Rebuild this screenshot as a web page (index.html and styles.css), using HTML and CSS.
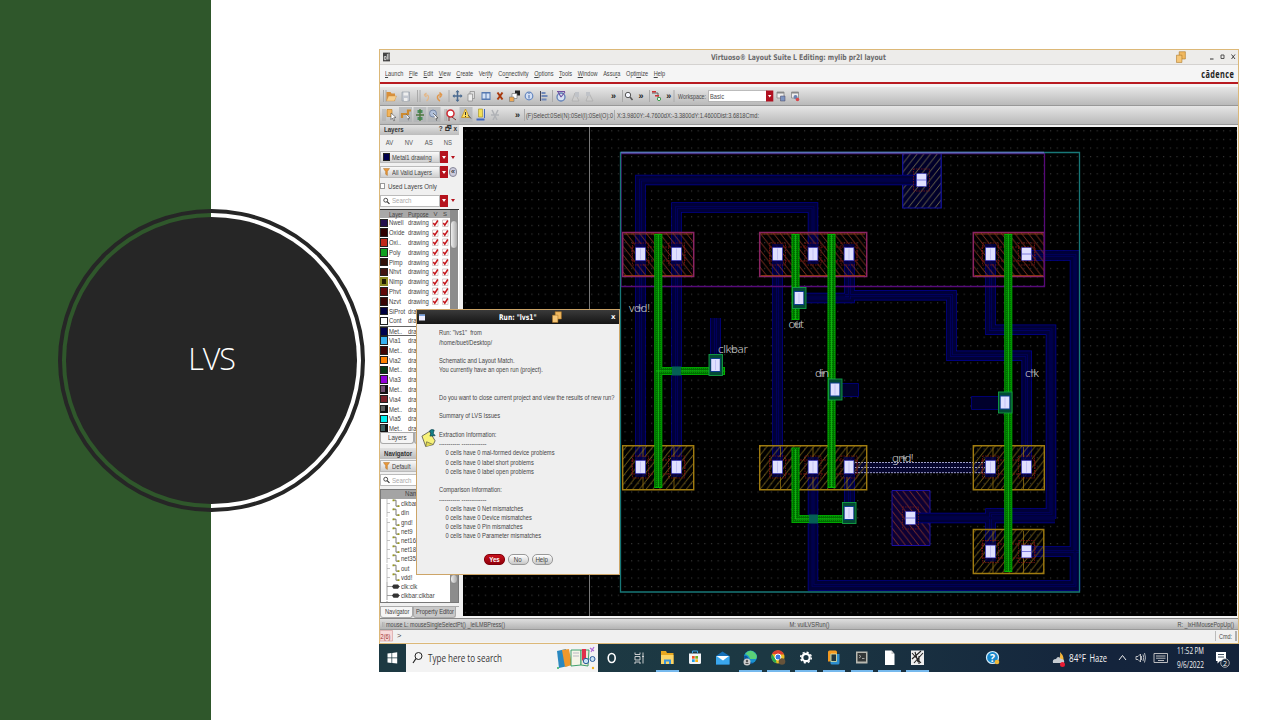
FILE: index.html
```html
<!DOCTYPE html>
<html lang="en">
<head>
<meta charset="utf-8">
<title>LVS</title>
<link rel="stylesheet" href="styles.css">
</head>
<body>
<svg class="defs" width="0" height="0">
  <defs>
    <symbol id="chk" viewBox="0 0 7 8"><rect width="7" height="8" fill="#fff"/><path d="M.5 7.500V1H6v6.500z" fill="none" stroke="#c8b8b8" stroke-width=".7"/><path d="M1.300 4l1.500 2.200L5.800 1.500" fill="none" stroke="#c4161c" stroke-width="1.500"/></symbol>
    <symbol id="net" viewBox="0 0 20 9"><path d="M6 0v9M6 4.500h3" stroke="#aaa" stroke-width=".7"/><path d="M12 1.200h3v6h3" fill="none" stroke="#666" stroke-width=".9"/><path d="M11.500 .5h2v1.700h-2zM16.500 6.300h2V8h-2z" fill="#9a9a20"/></symbol>
    <symbol id="pin" viewBox="0 0 20 9"><path d="M6 0v9M6 4.500h13" stroke="#888" stroke-width=".8"/><path d="M11 4.500l1.500-2H17l1.500 2-1.500 2.200h-4.500z" fill="#333"/></symbol>
    <symbol id="funnel" viewBox="0 0 8 9"><path d="M.5.500h7L5 4v4.500L3 7V4z" fill="#e8973a" stroke="#a86a20" stroke-width=".5"/></symbol>
    <symbol id="mag" viewBox="0 0 9 9"><circle cx="3.500" cy="3.500" r="2.500" fill="#fff" stroke="#333" stroke-width="1.100"/><path d="M5.300 5.300l3 3" stroke="#333" stroke-width="1.500"/></symbol>
    <symbol id="sheets" viewBox="0 0 11 13"><path d="M3.500.700h6.800v8H3.500z" fill="#f0b860" stroke="#a87020" stroke-width=".6"/><path d="M.5 4.500h6v8h-6z" fill="#f6c778" stroke="#a87020" stroke-width=".6"/></symbol>
  </defs>
</svg>
<main class="slide">
  <aside class="band"></aside>
  <div class="disc"><div class="disc-in">LVS</div></div>
  <section class="shot">
    <div class="win">
      <header class="title">
        <svg class="app" viewBox="0 0 8 10"><path d="M0 0h8v10H0z" fill="#444"/><path d="M1.500 8V4.500h2V8zM5 1.500V8M6.800 1v7" stroke="#eee" fill="none" stroke-width=".9"/></svg>
        <span class="title-text">Virtuoso® Layout Suite L Editing: mylib pr2l layout</span>
        <svg class="tsheets"><use href="#sheets"/></svg>
        <svg class="wbtn" viewBox="0 0 28 8"><path d="M1 6h3.500" stroke="#333"/><path d="M12 2h3v3.500h-3z" fill="none" stroke="#444" stroke-width=".9"/><path d="M22.500 1.500l3.500 4.500M26 1.500L22.500 6" stroke="#333" stroke-width=".9"/></svg>
      </header>
      <nav class="menu">
        <div class="menu-items"><span><u>L</u>aunch</span><span><u>F</u>ile</span><span><u>E</u>dit</span><span><u>V</u>iew</span><span><u>C</u>reate</span><span>Ver<u>i</u>fy</span><span>Co<u>n</u>nectivity</span><span><u>O</u>ptions</span><span><u>T</u>ools</span><span><u>W</u>indow</span><span>Assu<u>r</u>a</span><span>Opti<u>m</u>ize</span><span><u>H</u>elp</span></div>
        <div class="brand">cādence</div>
      </nav>
      <div class="tools">
        <svg width="859" height="18" viewBox="380 87 859 18">
          <g fill="none" stroke="#aaa" stroke-width="1"><path d="M383.500 90v12M386 90v12M417.500 90v12M420 90v12M449 90v12M552.500 90v12M622.500 90v12M649.500 90v12M674 90v12"/></g>
          <path d="M386.500 92h4l1 1.500h3.500V101h-8.500z" fill="#d88f3a"/><path d="M386.500 101l2-5h8l-2 5z" fill="#f5cf90" stroke="#c98b3c" stroke-width=".4"/>
          <path d="M402 92h7.500v9H402z" fill="#c4c8d0" stroke="#9aa0aa" stroke-width=".7"/><path d="M403.500 92.500h4.500v3h-4.500zM404 98h3.500v3H404z" fill="#eee"/>
          <path d="M424 95l2.500-2M424 95l2.500 2M424 95q5-1 4.500 3-.5 2-2 3" fill="none" stroke="#e3b88a" stroke-width="1.300"/>
          <path d="M442 95l-2.500-2.500M442 95l-2.500 2.500M442 95q-5-1-4.500 3 .5 2 2.500 3" fill="none" stroke="#e0964a" stroke-width="1.500"/>
          <path d="M457.500 91v10M453.500 96h8" stroke="#4a6a90" stroke-width="1.500"/><path d="M457.500 90l2 2.300h-4zM457.500 102l2-2.300h-4zM452.500 96l2-2v4zM462.500 96l-2-2v4z" fill="#4a6a90"/>
          <path d="M470 91.500h4.500v7H470z" fill="#ddd" stroke="#888" stroke-width=".7"/><path d="M468 94h4.500v7H468z" fill="#eee" stroke="#888" stroke-width=".7"/>
          <path d="M481.500 92h9v8h-9z" fill="#5578b0"/><path d="M482.500 93.500h3v5h-3zM486.500 93.500h3v5h-3z" fill="#d5e2f5"/>
          <path d="M497.500 92.500l5 7M502.500 92.500l-5 7" stroke="#a8380c" stroke-width="2"/>
          <path d="M515 90.500h5v5h-5z" fill="#222"/><path d="M512 93.500h5v5h-5z" fill="#fff" stroke="#777" stroke-width=".7"/><path d="M509.500 97h4.500v4.500h-4.500z" fill="#f0a850" stroke="#777" stroke-width=".6"/>
          <circle cx="529" cy="96" r="3.800" fill="#d4e0f4" stroke="#6688c0" stroke-width="1.200"/><path d="M529 95v3.500M529 93v1" stroke="#4468a8"/>
          <path d="M540.500 91v10" stroke="#445" stroke-width="1"/><path d="M541.500 92h4v2h-4zM541.500 95h6v2h-6zM541.500 98.500h5v2h-5z" fill="#7088b8"/>
          <circle cx="561" cy="97" r="4" fill="#d8e2f2" stroke="#6080b8" stroke-width="1.300"/><path d="M561 97l-3-5M561 97l4-5M557 91.500h8" stroke="#7050a0" stroke-width="1.100"/>
          <path d="M572 101l3-8 4 8zM586 101l3-8 4 8z" fill="#ccc" stroke="#aaa" stroke-width=".7"/><path d="M575 92h4v5h-4zM586 92h4v4h-4z" fill="#c0c3c8"/>
          <g class="more"><text x="611" y="98.700">»</text><text x="638.500" y="98.700">»</text><text x="666.300" y="98.700">»</text></g>
          <circle cx="628" cy="95" r="2.700" fill="#f6f8ff" stroke="#555"/><path d="M630 97l2.500 3" stroke="#555" stroke-width="1.500"/>
          <path d="M652 93h6v5h2.500" fill="none" stroke="#555" stroke-width=".9"/><path d="M652 91h4v1.500h-4zM655 95h4v1.500h-4z" fill="#c33"/><circle cx="659" cy="99" r="1.600" fill="#fff" stroke="#3a9a4a"/>
          <text class="st" x="678" y="99" textLength="28" lengthAdjust="spacingAndGlyphs">Workspace:</text>
          <path d="M708.500 90.500H767v11h-58.500z" fill="#fff" stroke="#999" stroke-width=".6"/><text class="st" x="710" y="99" textLength="14" lengthAdjust="spacingAndGlyphs">Basic</text>
          <path d="M766 90.500h7.300v11H766z" fill="#b01020"/><path d="M768 95h3.400l-1.700 2.500z" fill="#fff"/>
          <path d="M777 92h7v6h-7z" fill="#eee" stroke="#888" stroke-width=".8"/><path d="M777 92h7v1.500h-7z" fill="#888"/><path d="M780.500 96h4.500v5h-4.500z" fill="#7d94c0" stroke="#446" stroke-width=".5"/>
          <path d="M791.500 92h7v6h-7z" fill="#eee" stroke="#888" stroke-width=".8"/><path d="M791.500 92h7v1.500h-7z" fill="#888"/><circle cx="795.500" cy="97" r="2" fill="#6a80b0"/><circle cx="797.500" cy="99.500" r="1.800" fill="#d8454a"/>
        </svg>
      </div>
      <div class="tools second">
        <svg width="859" height="18" viewBox="380 106 859 18">
          <path d="M399 107h13v15h-13zM413.500 107h13v15h-13zM427.500 107h13v15h-13zM459.500 107h13v15h-13z" fill="#aeb0b4" opacity=".7"/>
          <path d="M383 109v12M385 109v12M445 109v12M446.700 109v12M524.500 109v12" stroke="#aaa"/>
          <path d="M387 109.500h5v7h-5z" fill="#f3b45a" stroke="#b87820" stroke-width=".6"/><path d="M391 113l5 4.500-2.300.2 1 2.800-1 .3-1.200-2.800-1.500 1.500z" fill="#fff" stroke="#333" stroke-width=".5"/>
          <path d="M402 118v-4h6v-3.500h3" fill="none" stroke="#cc8a30" stroke-width="2.200"/><path d="M406 114l4 4-2 .3.500 2" fill="#fff" stroke="#333" stroke-width=".5"/>
          <path d="M417.500 110h5v3h-5zM417.500 117h5v3h-5z" fill="#4a9060"/><path d="M420 109v12M416 115h8" stroke="#507840" stroke-width="1.400"/>
          <circle cx="433" cy="113.500" r="3.500" fill="#b0c0da" stroke="#7788a8"/><path d="M433 113l5 5-2 .2.600 2.500" fill="#fff" stroke="#444" stroke-width=".7"/>
          <circle cx="450.500" cy="113.500" r="3.500" fill="#fff" stroke="#d02830" stroke-width="1.500"/><path d="M449 117v4M452 117l4 3" stroke="#733"/>
          <path d="M465.500 109l4 8.500h-8z" fill="#ffe060" stroke="#c09020" stroke-width=".8"/><path d="M465.500 112v3M465.500 116v1" stroke="#333"/><path d="M468 115l3 3.500" stroke="#555"/>
          <path d="M478.500 109h4v8h-4z" fill="#f4e058" stroke="#a09020" stroke-width=".6"/><path d="M476.500 118.500h8v2h-8z" fill="#4068c0"/><path d="M484.500 109v9" stroke="#4068c0"/>
          <path d="M492 110l5 10M498 110l-5 10M491 115h8" stroke="#b0b2b6" stroke-width="1.500"/>
          <g class="more"><text x="515" y="117.700">»</text></g>
          <text class="st" x="526" y="117.500" textLength="87" lengthAdjust="spacingAndGlyphs">(F)Select:0Sel(N):0Sel(I):0Sel(O):0</text><path d="M614.500 110v10" stroke="#999" stroke-width=".7"/>
          <text class="st" x="617" y="117.500" textLength="142" lengthAdjust="spacingAndGlyphs">X:3.9800Y:-4.7600dX:-3.3800dY:1.4600Dist:3.6818Cmd:</text>
        </svg>
      </div>
      <div class="work">
        <div class="side">
          <div class="head"><b>Layers</b><span>? 🗗 x</span></div>
          <div class="avs"><span>AV</span><span>NV</span><span>AS</span><span>NS</span></div>
          <div class="pick"><div class="combo"><i class="sw" style="background:#00004e"></i><span class="t">Metal1 drawing</span></div><i class="drop"></i><i class="tri"></i></div>
          <div class="pick"><div class="combo"><svg class="fun"><use href="#funnel"/></svg><span class="t">All Valid Layers</span></div><i class="drop"></i><i class="rew">«</i></div>
          <div class="used"><i></i><span class="t">Used Layers Only</span></div>
          <div class="pick find"><div class="combo white"><svg class="fun"><use href="#mag"/></svg><span class="t ph">Search</span></div><i class="drop"></i><i class="tri"></i></div>
          <div class="table">
            <div class="rows">
              <div class="row th"><i></i><span>Layer</span><span>Purpose</span><em>V</em><em>S</em></div>
              <div class="row"><i style="background:#24104e"></i><span>Nwell</span><span>drawing</span><svg><use href="#chk"/></svg><svg><use href="#chk"/></svg></div>
              <div class="row"><i style="background:#300000"></i><span>Oxide</span><span>drawing</span><svg><use href="#chk"/></svg><svg><use href="#chk"/></svg></div>
              <div class="row"><i style="background:#c02818"></i><span>Oxi..</span><span>drawing</span><svg><use href="#chk"/></svg><svg><use href="#chk"/></svg></div>
              <div class="row"><i style="background:#10a020"></i><span>Poly</span><span>drawing</span><svg><use href="#chk"/></svg><svg><use href="#chk"/></svg></div>
              <div class="row"><i style="background:#301008"></i><span>Pimp</span><span>drawing</span><svg><use href="#chk"/></svg><svg><use href="#chk"/></svg></div>
              <div class="row"><i style="background:#401410"></i><span>Nhvt</span><span>drawing</span><svg><use href="#chk"/></svg><svg><use href="#chk"/></svg></div>
              <div class="row"><i class="yl"></i><span>Nimp</span><span>drawing</span><svg><use href="#chk"/></svg><svg><use href="#chk"/></svg></div>
              <div class="row"><i style="background:#600808"></i><span>Phvt</span><span>drawing</span><svg><use href="#chk"/></svg><svg><use href="#chk"/></svg></div>
              <div class="row"><i style="background:#380404"></i><span>Nzvt</span><span>drawing</span><svg><use href="#chk"/></svg><svg><use href="#chk"/></svg></div>
              <div class="row"><i style="background:#000040"></i><span>SiProt</span><span>drawing</span></div>
              <div class="row"><i style="background:#fff"></i><span>Cont</span><span>drawing</span></div>
              <div class="row cur"><i style="background:#00004e"></i><span>Met..</span><span>drawing</span></div>
              <div class="row"><i style="background:#38b0f0"></i><span>Via1</span><span>drawing</span></div>
              <div class="row"><i style="background:#400404"></i><span>Met..</span><span>drawing</span></div>
              <div class="row"><i style="background:#ff8000"></i><span>Via2</span><span>drawing</span></div>
              <div class="row"><i style="background:#063a14"></i><span>Met..</span><span>drawing</span></div>
              <div class="row"><i style="background:#9000d8"></i><span>Via3</span><span>drawing</span></div>
              <div class="row"><i class="mx" style="background:#705070"></i><span>Met..</span><span>drawing</span></div>
              <div class="row"><i style="background:#782028"></i><span>Via4</span><span>drawing</span></div>
              <div class="row"><i class="mx" style="background:#606060"></i><span>Met..</span><span>drawing</span></div>
              <div class="row"><i style="background:#00f0f0"></i><span>Via5</span><span>drawing</span></div>
              <div class="row"><i class="mx" style="background:#406060"></i><span>Met..</span><span>drawing</span></div>
            </div>
            <div class="scroll"><i></i></div>
          </div>
          <div class="tabs"><span class="tab on"><span class="t">Layers</span></span><span class="tab"></span></div>
          <div class="head nav"><b>Navigator</b></div>
          <div class="pick"><div class="combo"><svg class="fun"><use href="#funnel"/></svg><span class="t">Default</span></div></div>
          <div class="pick find2"><div class="combo white"><svg class="fun"><use href="#mag"/></svg><span class="t ph">Search</span></div></div>
          <div class="tree">
            <div class="nets">
              <div class="nh"><span class="t">Name</span></div>
              <div class="nr"><svg><use href="#net"/></svg><span>clkbar</span></div>
              <div class="nr"><svg><use href="#net"/></svg><span>din</span></div>
              <div class="nr"><svg><use href="#net"/></svg><span>gnd!</span></div>
              <div class="nr"><svg><use href="#net"/></svg><span>net9</span></div>
              <div class="nr"><svg><use href="#net"/></svg><span>net16</span></div>
              <div class="nr"><svg><use href="#net"/></svg><span>net18</span></div>
              <div class="nr"><svg><use href="#net"/></svg><span>net35</span></div>
              <div class="nr"><svg><use href="#net"/></svg><span>out</span></div>
              <div class="nr"><svg><use href="#net"/></svg><span>vdd!</span></div>
              <div class="nr"><svg><use href="#pin"/></svg><span>clk:clk</span></div>
              <div class="nr"><svg><use href="#pin"/></svg><span>clkbar:clkbar</span></div>
              <div class="nr"><svg><use href="#pin"/></svg><span>din:din</span></div>
            </div>
            <div class="scroll low"><i></i></div>
          </div>
          <div class="tabs bottom"><span class="tab on"><span class="t">Navigator</span></span><span class="tab"><span class="t">Property Editor</span></span></div>
        </div>
        <svg class="canvas" viewBox="463 127 774 489">
          <defs>
            <pattern id="dots" x="462" y="135" width="6.650" height="8.600" patternUnits="userSpaceOnUse"><rect x="3" y="4" width="1" height="1" fill="#4c4c4c"/></pattern>
            <pattern id="bs" width="6.700" height="8.500" patternUnits="userSpaceOnUse"><path d="M-1-1.270L7.700 9.770M-1 7.230L1 9.770M5.700-1.270L7.700 1.270" stroke="#9a3c26" stroke-width=".8"/></pattern>
            <pattern id="fs" width="6.700" height="8.500" patternUnits="userSpaceOnUse"><path d="M-1 9.770L7.700-1.270M-1 1.270L1-1.270M5.700 9.770L7.700 7.230" stroke="#92761a" stroke-width=".8"/></pattern>
            <pattern id="fsg" width="6.700" height="8.500" patternUnits="userSpaceOnUse"><path d="M-1 9.770L7.700-1.270M-1 1.270L1-1.270M5.700 9.770L7.700 7.230" stroke="#77714e" stroke-width=".9"/></pattern>
            <pattern id="gp" width="2" height="2" patternUnits="userSpaceOnUse"><rect width="2" height="2" fill="#006c00"/><rect width="1" height="1" fill="#009800"/></pattern>
            <g id="wires" fill="none">
              <path d="M640.500 472V180H925M676.500 472V207.500H813V258M777.500 249V472M799 298H849.500V249M845 295.300H951.500V355.700H1026.700V472M990.500 249V329.700H1051V513.500H990.500V556M905 518H1055M1026 255.500H1075V585.500H813V462M1022 551.500H1079M849.500 462V516M715.500 318V368"/>
            </g>
            <g id="cont"><rect x="-8" y="-11" width="16" height="22" fill="none" stroke="#7c1414" stroke-width=".8" stroke-dasharray="1.500 1"/><rect x="-5.500" y="-10" width="11" height="20" fill="#00004c" opacity=".8"/><rect x="-4.800" y="-6.300" width="9.600" height="12.600" fill="#e0e0ff" stroke="#5050d8" stroke-width=".6"/><path d="M0-5.500v11" stroke="#b4b4f2" stroke-width=".7"/></g>
            <g id="conth"><rect x="-8" y="-11" width="16" height="22" fill="none" stroke="#7c1414" stroke-width=".8" stroke-dasharray="1.500 1"/><rect x="-4.800" y="-6.300" width="9.600" height="12.600" fill="#e0e0ff" stroke="#5050d8" stroke-width=".6"/><path d="M-4.500 0h9" stroke="#7070d8" stroke-width=".9"/></g>
            <g id="via"><rect x="-6.500" y="-10.500" width="13.500" height="21" fill="#034a34" stroke="#12a044" stroke-width=".9"/><rect x="-5" y="-7" width="10" height="14" fill="#0c3c90"/><rect x="-4.300" y="-6" width="8.600" height="12" fill="#e0e0ff"/><path d="M0-5v10" stroke="#b4b4f2" stroke-width=".7"/></g>
          </defs>
          <path d="M463 127h774v489H463z" fill="#000"/>
          <path d="M463 127h774v489H463z" fill="url(#dots)"/>
          <path d="M589.500 127v489" stroke="#777" stroke-width="1"/>
          <path d="M902.700 153h38.500v55h-38.500z" fill="#00002a"/><path d="M902.700 153h38.500v55h-38.500z" fill="url(#fsg)" stroke="#1414a0" stroke-width="1.200"/>
          <path d="M892 490.500h38v55h-38z" fill="#0c0034"/><path d="M892 490.500h38v55h-38z" fill="url(#bs)" stroke="#1c10a0" stroke-width="1"/>
          <use href="#wires" stroke="#000094" stroke-width="10.500"/>
          <use href="#wires" stroke="#000038" stroke-width="9"/>
          <use href="#wires" stroke="#00006c" stroke-width="2.600"/>
          <use href="#wires" stroke="#00003c" stroke-width="1.300"/>
          <path d="M835 383.500h23.500v13H835zM971.500 396.500H1000v13h-28.500z" fill="#00002c" stroke="#00007c" stroke-width=".9"/>
          <path d="M849 462.500h141v10.500H849z" fill="#06062e"/><path d="M849 462.500h141M849 467.500h141M849 472.700h141" stroke="#9c9cc8" stroke-width="1" stroke-dasharray="2 1"/>
          <g fill="url(#bs)" stroke="#8c2464" stroke-width="1.500">
            <path d="M622.700 232.500h71v44h-71zM759.700 232.500h107v44h-107zM973.300 232.500h71v44h-71z"/>
            <path d="M624 234h68M624 275.500h68M761 234h104M761 275.500h104M975 234h68M975 275.500h68" stroke="#a04010" stroke-width=".8"/>
          </g>
          <g fill="url(#fs)" stroke="#a07c10" stroke-width="1.400">
            <path d="M622.700 445.700h71v44h-71zM759.700 445.700h107v44h-107zM973.300 445.700h71v44h-71zM973.300 529.500h70.500v44h-70.500z"/>
            <path d="M643 447v42M674 447v42M780.500 447v42M813 447v42M847 447v42M993 447v42M1023.500 447v42M993 531v42M1023.500 531v42" stroke-width=".7"/>
          </g>
          <path d="M632 247h53v14h-53zM632 460h53v14h-53zM770 247h87v14h-87zM770 460h87v14h-87zM982 247h53v14h-53zM982 460h53v14h-53zM982 544h53v14h-53z" fill="none" stroke="#801410" stroke-width=".8" stroke-dasharray="2 1"/>
          <path d="M621 153.500h423.500v133H621z" fill="none" stroke="#560a78" stroke-width="1.300"/>
          <path d="M620.500 152.500h459V592h-459z" fill="none" stroke="#187878" stroke-width="1.300"/><path d="M621 152.500h423" stroke="#5a70b8" stroke-width="1.300"/>
          <g fill="none" stroke="#00b400">
            <g stroke-width="8"><path d="M658.300 234v254M795.500 234v86M831.500 234v254M1008.300 234v338M654.500 371H725M795.500 447.500V519H853"/></g>
            <g stroke="url(#gp)" stroke-width="6.300"><path d="M658.300 235v252M795.500 235v84M831.500 235v252M1008.300 235v336M655.500 371L724 371.010M795.500 448V519H852"/></g>
            <path d="M658.300 235v252M795.500 235v84M831.500 235v252M1008.300 235v336M656 371H724M795.500 449V519H852" stroke="#18cc18" stroke-width=".7"/>
          </g>
          <path d="M672 366.500h9v9h-9zM809 514.500h9v9h-9z" fill="#056055"/>
          <use href="#cont" x="640.500" y="254"/><use href="#cont" x="676.500" y="254"/><use href="#cont" x="777.500" y="254"/><use href="#cont" x="813" y="254"/><use href="#cont" x="849" y="254"/><use href="#cont" x="990.500" y="254"/><use href="#conth" x="1026.500" y="254"/>
          <use href="#cont" x="640.500" y="467"/><use href="#cont" x="676.500" y="467"/><use href="#cont" x="777.500" y="467"/><use href="#cont" x="813" y="467"/><use href="#cont" x="849" y="467"/><use href="#cont" x="990.500" y="467"/><use href="#cont" x="1026.500" y="467"/>
          <use href="#conth" x="921.500" y="180"/><use href="#conth" x="910.500" y="518"/><use href="#cont" x="990.500" y="551.500"/><use href="#conth" x="1026.500" y="551.500"/>
          <use href="#via" x="799" y="298"/><use href="#via" x="715.500" y="365"/><use href="#via" x="835" y="389.500"/><use href="#via" x="849" y="513"/><use href="#via" x="1005" y="402.500"/>
          <g class="lab"><text x="629" y="312" textLength="21">vdd!</text><text x="788.500" y="328" textLength="15.500">out</text><text x="718" y="352.500" textLength="30">clkbar</text><text x="815" y="376.500" textLength="14">din</text><text x="892" y="461.500" textLength="21.500">gnd!</text><text x="1025" y="376.500" textLength="14">clk</text></g>
          <path d="M637 308h6M794 324h6M730 349h6M819 373h6M901 458h6M1030 372h6M797 321v6M904 455v6" stroke="#ccc" stroke-width=".7"/>
        </svg>
      </div>
      <div class="mouse"><svg width="859" height="12" viewBox="380 618 859 12"><path d="M382.500 622v5M384 622v5" stroke="#aaa" stroke-width=".7"/><text class="st" x="386" y="627" textLength="119" lengthAdjust="spacingAndGlyphs">mouse L: mouseSingleSelectPt() _leiLMBPress()</text><text class="st" x="789.500" y="627" textLength="40" lengthAdjust="spacingAndGlyphs">M: vuiLVSRun()</text><text class="st" x="1177.500" y="627" textLength="56.500" lengthAdjust="spacingAndGlyphs">R: _lxHiMousePopUp()</text></svg></div>
      <div class="cmd"><svg width="859" height="12" viewBox="380 631 859 12"><path d="M380 631.500h12.500v10.500H380z" fill="#f7d9d9" stroke="#d9a0a0" stroke-width=".7"/><text class="st red" x="380.500" y="639.500" textLength="10" lengthAdjust="spacingAndGlyphs">2(6)</text><text class="st" x="397" y="639">&gt;</text><path d="M1215.500 632v10" stroke="#bbb"/><text class="st" x="1219" y="639.500" textLength="13" lengthAdjust="spacingAndGlyphs">Cmd:</text><path d="M1236 632v10" stroke="#999" stroke-width="1.500"/></svg></div>
    </div>
    <div class="dialog">
      <div class="dtitle"><svg class="dico" viewBox="0 0 7 7"><path d="M0 0h7v7H0z" fill="#eef"/><path d="M0 0h7v1.500H0z" fill="#5a8fd8"/></svg><b>Run: "lvs1"</b><svg class="dsheets"><use href="#sheets"/></svg><span>x</span></div>
      <div class="dbody">
        <svg class="note" viewBox="0 0 17 20"><path d="M1 8l8-5 6 10-2 4-8 2z" fill="#f7f27a" stroke="#444" stroke-width=".8"/><path d="M5 19l1-5 7 3" fill="#e0d850" stroke="#444" stroke-width=".6"/><path d="M9 2.500Q11 0 14 1.500L13 5l2 2.500L9.500 8l1-3z" fill="#168088" stroke="#053a44" stroke-width=".7"/></svg>
        <pre>Run: "lvs1"  from
/home/buet/Desktop/

Schematic and Layout Match.
You currently have an open run (project).


Do you want to close current project and view the results of new run?

Summary of LVS Issues

Extraction Information:
----------- -------------
    0 cells have 0 mal-formed device problems
    0 cells have 0 label short problems
    0 cells have 0 label open problems

Comparison Information:
----------- -------------
    0 cells have 0 Net mismatches
    0 cells have 0 Device mismatches
    0 cells have 0 Pin mismatches
    0 cells have 0 Parameter mismatches</pre>
      </div>
      <div class="btns"><span class="yes"><span>Yes</span></span><span><span>No</span></span><span><span>Help</span></span></div>
    </div>
    <div class="taskbar">
      <svg width="860" height="28" viewBox="379 644 860 28">
        <path d="M387.500 653.500l4-.5v4.600h-4zM392.200 653l5-.7v5.300h-5zM387.500 658.300h4v4.600l-4-.5zM392.200 658.300h5v5.300l-5-.7z" fill="#fff"/>
        <path d="M406 644h192v28H406z" fill="#f3f3f3"/>
        <circle cx="418.500" cy="656" r="3.500" fill="none" stroke="#222"/><path d="M416 658.500l-3 4.500" stroke="#222" stroke-width="1.200"/>
        <text x="428" y="662" textLength="74" lengthAdjust="spacingAndGlyphs" font-family="Open Sans" font-size="11" fill="#333">Type here to search</text>
        <path d="M557 651l9-2 2 17-9 2z" fill="#2a88c0"/><path d="M562 650l7-1 3 16-7 2z" fill="#f0982c"/><path d="M571 650h10v15l-10 1z" fill="#f5f5e8" stroke="#2b9860" stroke-width=".9"/><path d="M581 650h8l-1 16-7-1z" fill="#eee8da" stroke="#2b9860" stroke-width=".9"/><path d="M573 653h6M573 656h6" stroke="#aab" stroke-width=".8"/><path d="M582 649h4v12l-2-2-2 2z" fill="#e0304c"/><circle cx="586" cy="661" r="2.700" fill="#c8e2f4" stroke="#2d5c9c"/><circle cx="592.500" cy="659" r="2.500" fill="#c8e2f4" stroke="#2d5c9c"/><path d="M590 648l4 3M594 647l-3 5" stroke="#b06ad8" stroke-width="1.200"/><circle cx="558" cy="668" r="1" fill="#30b060"/><circle cx="593" cy="668" r="1.200" fill="#f0b020"/>
        <ellipse cx="611.700" cy="658" rx="3.500" ry="4.500" fill="none" stroke="#fff" stroke-width="1.600"/>
        <path d="M635 652.500v2h5v-2M635 664v-2h5v2M635 656.500h5v3.500h-5zM643 652.500v11M642 656.500h2" fill="none" stroke="#ddd" stroke-width=".9"/>
        <path d="M661 651h5l1 2h6.500v11H661z" fill="#e8a820"/><path d="M661 655h12.500v9H661z" fill="#fcd667"/><path d="M664 664v-4.500h7v4.500h-2v-2.500h-3v2.500z" fill="#3a94dc"/>
        <path d="M689 653.500h12v9q0 1.500-1.500 1.500h-9q-1.500 0-1.500-1.500z" fill="#f2f4f7"/><path d="M692.500 653v-2h5v2" fill="none" stroke="#39a0e0"/><path d="M692 656h2.700v2.700H692z" fill="#f05020"/><path d="M695.300 656h2.700v2.700h-2.700z" fill="#70b020"/><path d="M692 659.300h2.700v2.700H692z" fill="#20a0e8"/><path d="M695.300 659.300h2.700v2.700h-2.700z" fill="#f8b010"/>
        <path d="M716 656l6.500-4.500 7 4.500v8.500H716z" fill="#1670b8"/><path d="M716 656h13.500v8.500H716z" fill="#3aa7ee"/><path d="M716.500 656h12.500l-6 4.500z" fill="#fff"/>
        <circle cx="750.500" cy="657" r="6.500" fill="#1890d0"/><path d="M745 654q5-6 10-1 3 3 1 6h-6q-1-4-5-5" fill="#5ad078"/><path d="M744 656q4-1 5 5 2 2 5 2-5 2-9-2z" fill="#0c5298"/><circle cx="747" cy="662" r="3.500" fill="#ccc"/><circle cx="747" cy="661" r="1.200" fill="#555"/><path d="M745 664q2-2.500 4 0z" fill="#555"/>
        <circle cx="778" cy="657" r="6.500" fill="#eabc20"/><path d="M772 654a6.500 6.500 0 0 1 12 .5h-6z" fill="#e04030"/><path d="M772 654l4 6 .500 3.300a6.500 6.500 0 0 1-4.500-9.300" fill="#28a850"/><circle cx="778" cy="657" r="3" fill="#3a78e0" stroke="#fff"/><circle cx="782" cy="661.500" r="3.300" fill="#66533a"/>
        <circle cx="806" cy="657.500" r="3.700" fill="none" stroke="#fff" stroke-width="2.200"/><circle cx="806" cy="657.500" r="5.300" fill="none" stroke="#fff" stroke-width="1.500" stroke-dasharray="2.100 2.060"/>
        <path d="M828 652q0-1.500 1.500-1.500h6q1.500 0 1.500 1.500v9.500h-9z" fill="#f39a20"/><path d="M830.500 654h9v9q0 1.500-1.500 1.500h-6q-1.500 0-1.500-1.500z" fill="#2c8ed0"/><path d="M831 654h5.500v7.500H831z" fill="#20343c" stroke="#e0e8b0" stroke-width=".8"/>
        <path d="M856 651.500h11.500v12H856z" fill="#b8b8b0"/><path d="M857.500 653h8.500v8.500h-8.500z" fill="#343838"/><path d="M859 655l2 1.500-2 1.500M862 658.500h2.500" fill="none" stroke="#ccc" stroke-width=".7"/>
        <path d="M885 650.500h6.500l3 3.500v11H885z" fill="#fff"/><path d="M891.500 650.500v3.500h3" fill="#ccc"/>
        <path d="M911 650.500h13v14.500h-13z" fill="#eee"/><path d="M912 659l9-8M914 663l9-10M912 653l9 10M915 652l3 10M919 656v8" stroke="#222" stroke-width="1.100"/>
        <path d="M656 670h23v2h-23zM739 670h23v2h-23zM767 670h23v2h-23zM795 670h22v2h-22zM823 670h22v2h-22zM851 670h22v2h-22zM878 670h23v2h-23zM906 670h23v2h-23z" fill="#76b9ed"/>
        <circle cx="992.500" cy="657.500" r="6" fill="#1888cc" stroke="#d8eefc" stroke-width="1.200"/><text x="990" y="662" font-family="Open Sans" font-weight="700" font-size="11" fill="#fff" textLength="5" lengthAdjust="spacingAndGlyphs">?</text><circle cx="997" cy="662" r="2.300" fill="#f0b838"/>
        <path d="M1060 652q5 5 3 10h-6q4-4 3-10" fill="#f5b73b"/><path d="M1053 663q-1-4 3-4 2-4 5 0 4 0 3 4z" fill="#c6cbd1"/><circle cx="1062.500" cy="664.500" r="2.500" fill="#e81c34"/>
        <g font-family="Open Sans" fill="#f4f4f4"><text x="1069" y="662" font-size="10" textLength="17" lengthAdjust="spacingAndGlyphs">84°F</text><text x="1089.500" y="662" font-size="10" textLength="17.500" lengthAdjust="spacingAndGlyphs">Haze</text><text x="1177" y="654" font-size="8.500" textLength="27" lengthAdjust="spacingAndGlyphs">11:52 PM</text><text x="1177" y="667.500" font-size="8.500" textLength="27" lengthAdjust="spacingAndGlyphs">9/6/2022</text></g>
        <path d="M1119 660l3.500-4.500 3.500 4.500" fill="none" stroke="#eee"/>
        <path d="M1136 656.500h2l2.500-2.500v8l-2.500-2.500h-2zM1141.500 656v4M1143 654.500q1.500 3 0 6.500M1144.500 653q2 4.500 0 9.500" fill="none" stroke="#ddd" stroke-width=".8"/>
        <path d="M1154 653.500h13.500v9H1154zM1156 656h9.500M1156 658.200h9.500M1158 660.500h6" fill="none" stroke="#ccc" stroke-width=".9"/>
        <path d="M1216 652h10v9h-6l-2.500 2.500V661H1216z" fill="#fff"/><path d="M1218 654.500h6M1218 657h6" stroke="#14283c" stroke-width=".8"/><circle cx="1225" cy="663" r="4.300" fill="#16263a" stroke="#ccc" stroke-width=".8"/><text x="1223" y="666" font-family="Open Sans" font-size="8" fill="#fff" textLength="4" lengthAdjust="spacingAndGlyphs">2</text>
      </svg>
    </div>
  </section>
</main>
</body>
</html>
```
FILE: styles.css
```css
*{box-sizing:border-box}
body{margin:0;background:#fff;font-family:"Liberation Sans",Arial,sans-serif;width:1280px;height:720px;overflow:hidden}
i,em{font-style:normal}
svg{display:block;flex:none}
.defs{position:absolute}
.slide{position:relative;display:flex;height:720px}
.band{width:211px;flex:none;background:#2f572b}
.disc{position:absolute;left:58px;top:208.500px;width:307px;height:303px;border:4px solid #262626;border-radius:50%;padding:4px}
.disc-in{width:100%;height:100%;border-radius:50%;background:#262626;color:#fff;display:flex;align-items:center;justify-content:center;padding-bottom:4px;font:300 30.500px "Open Sans","Noto Sans",sans-serif;letter-spacing:-1.200px}
.shot{position:relative;margin:49px 0 0 168px;width:860px;height:623px;flex:none;display:flex;flex-direction:column}
.win{height:595px;border:1px solid #dcb878;background:#f4f4f4;display:flex;flex-direction:column;overflow:hidden}
.title{height:15px;flex:none;background:#edecea;border-bottom:1px solid #d4d2d0;display:flex;align-items:center}
.app{width:7px;height:10px;margin-left:3px}
.title-text{font:700 7.800px "DejaVu Sans","Noto Sans",sans-serif;color:#6a6a6a;width:175px;margin-left:321px;white-space:nowrap;transform:scaleX(.778);transform-origin:left}
.tsheets{width:10px;height:12px;margin-left:290px}
.wbtn{width:28px;height:8px;margin-left:23px}
.menu{height:18.500px;flex:none;background:#f5f5f5;border-bottom:2.500px solid #b81a20;display:flex;justify-content:space-between;align-items:center}
.menu-items{display:flex;gap:7.600px;margin-left:5px;font-size:7.500px;color:#444;transform:scaleX(.742);transform-origin:left}
.menu-items u{text-underline-offset:1px;text-decoration-thickness:.5px}
.brand{font:700 10.500px "Open Sans",sans-serif;color:#222;letter-spacing:.6px;transform:scaleX(.7);transform-origin:right;margin:2px 4px 0 0}
.tools{height:19px;flex:none;margin-top:3.500px;background:linear-gradient(#e6e6e6,#b9b9b9);border-bottom:1px solid #989898}
.tools.second{margin-top:0;height:18.500px;border-bottom-color:#999}
.st{font:7.500px "Liberation Sans",Arial,sans-serif;fill:#4a4a4a}
.st.red{fill:#a03030}
.more{font:700 9px "Liberation Sans",Arial,sans-serif;fill:#222}
.work{display:flex;height:493px;flex:none;background:#f4f4f4}
.side{width:83px;height:493px;flex:none;display:flex;flex-direction:column;overflow:hidden;padding-right:4px;background:#f0f0f0}
.canvas{width:774px;height:489px;margin-top:2.500px}
.head{height:10px;flex:none;display:flex;justify-content:space-between;align-items:center;padding:0 2px 0 4px;background:linear-gradient(#e2e2e2,#bcbcbc);font-size:7px;color:#333;line-height:1}
.head b{transform:scaleX(.87);transform-origin:left}
.head span{font-size:6.500px;font-weight:700;white-space:nowrap}
.avs{height:15px;flex:none;display:flex;justify-content:space-between;align-items:center;padding:0 6px 0 5px;font-size:7px;color:#555}
.avs span{transform:scaleX(.85)}
.t{font-size:7.500px;color:#444;white-space:nowrap;transform:scaleX(.82);transform-origin:left;display:inline-block}
.pick{height:15px;flex:none;display:flex;align-items:center}
.combo{width:60px;height:12px;display:flex;align-items:center;gap:2px;padding-left:2px;background:linear-gradient(#fafafa,#cfcfcf);border:1px solid #bbb;overflow:hidden}
.combo .t{width:40px}
.combo .t:not(.ph){transform:scaleX(.78)}
.combo.white{background:#fff}
.ph{color:#aaa}
.fun{width:7px;height:8px}
.sw{width:7px;height:8px;border:1px solid #222;flex:none}
.drop{width:8px;height:12px;background:#b5121c;display:flex;align-items:center;justify-content:center}
.drop::after,.tri::after{content:"";border:2px solid transparent;border-top:3px solid #fff;border-bottom:0}
.tri{width:10px;display:flex;justify-content:center}
.tri::after{border-top-color:#b5121c}
.rew{width:8px;height:10px;margin-left:1px;border-radius:4px;background:#ccd;border:1px solid #889;font-size:7px;line-height:7px;text-align:center}
.used{height:13.500px;flex:none;display:flex;align-items:center;gap:3px}
.used i{width:5px;height:6px;border:1px solid #999;background:#fff}
.table{height:223.500px;flex:none;margin-top:.5px;border-top:1px solid #333;display:flex;background:#fff;overflow:hidden}
.rows{width:70px;flex:none}
.row{height:9.810px;display:grid;grid-template-columns:9px 18.500px 23px 10px 9px;align-items:center;font-size:7.500px;line-height:9px;color:#444}
.row i{width:8px;height:8.500px;border:1px solid #222}
.row span{white-space:nowrap;transform:scaleX(.79);transform-origin:left}
.row svg{width:7px;height:8px;margin-left:1px}
.row.th{height:8.500px;background:#a8a8a8;font-size:7px}
.row.th i{border:0}
.row.th em{text-align:center;font-size:6px}
.row.cur{border-top:1px solid #666;border-bottom:1px solid #666}
.row .yl{background:#201c00;border:2px solid #8a8a20}
.row .mx{border-right:3px solid #111;border-bottom:2px solid #111}
.scroll{width:8px;background:#8c8c8c;padding-top:10px}
.scroll i{display:block;height:29px;border-radius:4px;background:linear-gradient(90deg,#eee,#aaa);border:1px solid #888}
.tabs{height:13.500px;flex:none;display:flex;border-top:1px solid #aaa;font-size:7.500px}
.tab{height:11px;border:1px solid #aaa;border-top:0;border-radius:0 0 3px 3px;background:#c8c8c8;padding-left:2px;line-height:9px;width:43px}
.tab.on{width:34px;background:#f5f5f5;padding-left:7px}
.nav{height:11px;margin-top:2px}
.find2{height:13px}
.tree{height:114px;flex:none;margin-top:2.500px;border:1px solid #777;display:flex;background:#fff;overflow:hidden;font-size:7.500px}
.nets{width:69px;flex:none}
.nh{height:9px;background:#a4a4a4;line-height:8px;padding-left:24px}
.nr{height:9.230px;display:flex;align-items:center;line-height:9px;color:#444}
.nr svg{width:20px;height:9px}
.nr span{transform:scaleX(.8);transform-origin:left;white-space:nowrap}
.scroll.low{width:8px;padding-top:84px}
.scroll.low i{height:10px}
.bottom{margin-top:2.500px;height:13px}
.bottom .tab.on{padding-left:4px;width:33px}
.bottom .tab{width:43px}
.bottom .t{transform:scaleX(.76)}
.mouse{height:12.500px;flex:none;background:linear-gradient(#dedede,#b4b4b4);border-bottom:1px solid #999;border-top:1px solid #888}
.mouse svg,.cmd svg{margin-top:-1px}
.cmd{height:12px;flex:none;background:#f0f0f0;padding-top:1px}
.lab{font:300 11.500px "Noto Sans",sans-serif;fill:#d2d2d2}
.dialog{position:absolute;left:37px;top:260px;width:204px;height:266px;border:1.500px solid #cda568;background:#efefef}
.dtitle{height:14px;background:linear-gradient(#3a3a3a,#151515);display:flex;align-items:center;color:#fff;font:700 7.800px "DejaVu Sans",sans-serif}
.dico{width:6px;height:7px;margin-left:2px}
.dtitle b{margin-left:74px;width:50px;white-space:nowrap;transform:scaleX(.77);transform-origin:left}
.dsheets{width:10px;height:12px;margin-left:3px}
.dtitle span{margin-left:49px;font-size:7px}
.dbody{display:flex;padding:4.300px 0 0 4px;height:230px}
.note{width:16px;height:20px;margin:100px 2px 0 0}
.dbody pre{margin:0;width:170px;font:7.600px/9.240px "Liberation Sans",Arial,sans-serif;color:#444;transform:scaleX(.756);transform-origin:left}
.btns{display:flex;gap:3px;padding-left:66.500px;height:11px}
.btns>span{width:21px;height:11px;border:1px solid #999;border-radius:5px;background:linear-gradient(#fff,#c8c8c8);display:flex;align-items:center;justify-content:center;font-size:7.500px;color:#444}
.btns>span>span{transform:scaleX(.82)}
.btns>.yes{background:linear-gradient(#c8101c,#90000a);border-color:#80000a;color:#fff;font-weight:700}
.taskbar{height:28px;background:linear-gradient(90deg,#1d3942,#1c3843 45%,#14243c 85%,#14233a)}
```
